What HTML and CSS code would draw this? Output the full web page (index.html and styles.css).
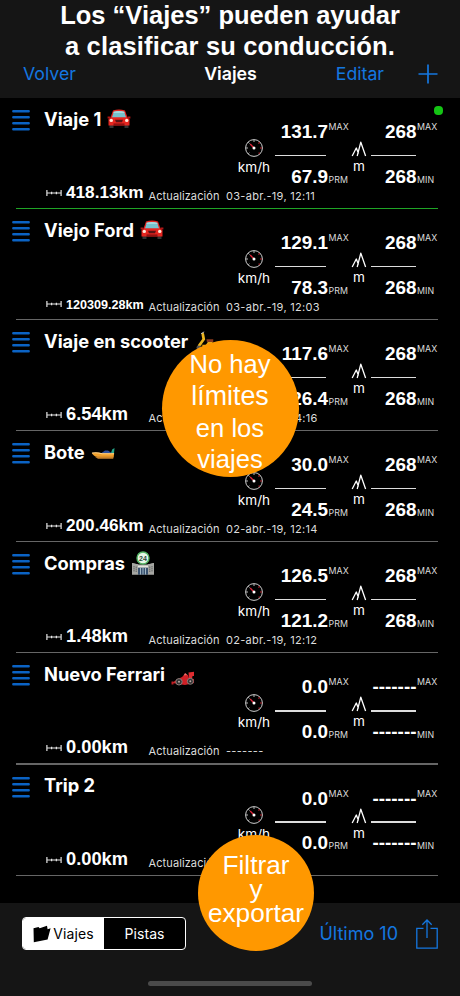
FILE: index.html
```
<!DOCTYPE html>
<html lang="es">
<head>
  <meta charset="utf-8">
  <meta name="viewport" content="width=device-width, initial-scale=1">
  <title>Viajes</title>
  <link rel="stylesheet" href="styles.css">
</head>
<body>

<div class="screen">

  <header class="header">
    <h1 class="headline">Los “Viajes” pueden ayudar<br><span class="second">a clasificar su conducción.</span></h1>
    <nav class="nav">
      <a class="back">Volver</a>
      <span class="nav-title">Viajes</span>
      <span class="nav-right">
        <a class="edit">Editar</a>
        <svg class="plus" viewBox="0 0 20 20"><path d="M10 .5v19M.5 10h19" stroke="#1477e0" stroke-width="1.700"/></svg>
      </span>
    </nav>
  </header>

  <main class="trips">

    <section class="trip active">
      <svg class="menu"><use href="#menu"/></svg>
      <h2 class="name">Viaje 1 <svg class="emoji"><use href="#car"/></svg></h2>
      <div class="unit speed"><svg><use href="#gauge"/></svg>km/h</div>
      <div class="stats"><b>131.7</b><i>MAX</i><hr><b>67.9</b><i class="low">PRM</i></div>
      <div class="unit alt"><svg><use href="#peaks"/></svg>m</div>
      <div class="stats"><b>268</b><i>MAX</i><hr><b>268</b><i class="low">MIN</i></div>
      <div class="foot"><svg class="ruler"><use href="#ruler"/></svg><span class="dist mid">418.13km</span><span class="upd">Actualización</span><span class="date">03-abr.-19, 12:11</span></div>
      <div class="divider"></div>
      <span class="dot"></span>
    </section>

    <section class="trip">
      <svg class="menu"><use href="#menu"/></svg>
      <h2 class="name">Viejo Ford <svg class="emoji"><use href="#car"/></svg></h2>
      <div class="unit speed"><svg><use href="#gauge"/></svg>km/h</div>
      <div class="stats"><b>129.1</b><i>MAX</i><hr><b>78.3</b><i class="low">PRM</i></div>
      <div class="unit alt"><svg><use href="#peaks"/></svg>m</div>
      <div class="stats"><b>268</b><i>MAX</i><hr><b>268</b><i class="low">MIN</i></div>
      <div class="foot"><svg class="ruler"><use href="#ruler"/></svg><span class="dist small">120309.28km</span><span class="upd">Actualización</span><span class="date">03-abr.-19, 12:03</span></div>
      <div class="divider"></div>
    </section>

    <section class="trip">
      <svg class="menu"><use href="#menu"/></svg>
      <h2 class="name">Viaje en scooter <svg class="emoji"><use href="#scooter"/></svg></h2>
      <div class="unit speed"><svg><use href="#gauge"/></svg>km/h</div>
      <div class="stats"><b>117.6</b><i>MAX</i><hr><b>26.4</b><i class="low">PRM</i></div>
      <div class="unit alt"><svg><use href="#peaks"/></svg>m</div>
      <div class="stats"><b>268</b><i>MAX</i><hr><b>268</b><i class="low">MIN</i></div>
      <div class="foot"><svg class="ruler"><use href="#ruler"/></svg><span class="dist">6.54km</span><span class="upd">Actualización</span><span class="date">02-abr.-19, 14:16</span></div>
      <div class="divider"></div>
    </section>

    <section class="trip">
      <svg class="menu"><use href="#menu"/></svg>
      <h2 class="name">Bote <svg class="emoji boat"><use href="#boat"/></svg></h2>
      <div class="unit speed"><svg><use href="#gauge"/></svg>km/h</div>
      <div class="stats"><b>30.0</b><i>MAX</i><hr><b>24.5</b><i class="low">PRM</i></div>
      <div class="unit alt"><svg><use href="#peaks"/></svg>m</div>
      <div class="stats"><b>268</b><i>MAX</i><hr><b>268</b><i class="low">MIN</i></div>
      <div class="foot"><svg class="ruler"><use href="#ruler"/></svg><span class="dist mid">200.46km</span><span class="upd">Actualización</span><span class="date">02-abr.-19, 12:14</span></div>
      <div class="divider"></div>
    </section>

    <section class="trip">
      <svg class="menu"><use href="#menu"/></svg>
      <h2 class="name">Compras <svg class="emoji tall"><use href="#store"/></svg></h2>
      <div class="unit speed"><svg><use href="#gauge"/></svg>km/h</div>
      <div class="stats"><b>126.5</b><i>MAX</i><hr><b>121.2</b><i class="low">PRM</i></div>
      <div class="unit alt"><svg><use href="#peaks"/></svg>m</div>
      <div class="stats"><b>268</b><i>MAX</i><hr><b>268</b><i class="low">MIN</i></div>
      <div class="foot"><svg class="ruler"><use href="#ruler"/></svg><span class="dist">1.48km</span><span class="upd">Actualización</span><span class="date">02-abr.-19, 12:12</span></div>
      <div class="divider"></div>
    </section>

    <section class="trip">
      <svg class="menu"><use href="#menu"/></svg>
      <h2 class="name">Nuevo Ferrari <svg class="emoji flat"><use href="#racer"/></svg></h2>
      <div class="unit speed"><svg><use href="#gauge"/></svg>km/h</div>
      <div class="stats"><b>0.0</b><i>MAX</i><hr><b>0.0</b><i class="low">PRM</i></div>
      <div class="unit alt"><svg><use href="#peaks"/></svg>m</div>
      <div class="stats"><b>-------</b><i>MAX</i><hr><b>-------</b><i class="low">MIN</i></div>
      <div class="foot"><svg class="ruler"><use href="#ruler"/></svg><span class="dist">0.00km</span><span class="upd">Actualización</span><span class="date">-------</span></div>
      <div class="divider"></div>
    </section>

    <section class="trip">
      <svg class="menu"><use href="#menu"/></svg>
      <h2 class="name">Trip 2</h2>
      <div class="unit speed"><svg><use href="#gauge"/></svg>km/h</div>
      <div class="stats"><b>0.0</b><i>MAX</i><hr><b>0.0</b><i class="low">PRM</i></div>
      <div class="unit alt"><svg><use href="#peaks"/></svg>m</div>
      <div class="stats"><b>-------</b><i>MAX</i><hr><b>-------</b><i class="low">MIN</i></div>
      <div class="foot"><svg class="ruler"><use href="#ruler"/></svg><span class="dist">0.00km</span><span class="upd">Actualización</span><span class="date">-------</span></div>
      <div class="divider"></div>
    </section>

  </main>

  <footer class="toolbar">
    <div class="tools">
      <div class="segmented">
        <span class="seg on"><svg class="folder" viewBox="0 0 18 18"><path d="M.5 3.200L5.500 2l1.200 1.300L14 .8l.6 3.400 3-.9-3 11.200L.8 17.300z" fill="#000"/></svg>Viajes</span>
        <span class="seg">Pistas</span>
      </div>
      <a class="filter">Último 10</a>
      <svg class="share" viewBox="0 0 22 30"><path d="M7.500 9.400H.8v19.800h20.400V9.400h-6.700M11 19V1.200M6.300 5.700L11 1l4.700 4.700" fill="none" stroke="#1477e0" stroke-width="1.300"/></svg>
    </div>
    <div class="home"></div>
  </footer>

  <div class="bubble limits"><span>No hay</span><span class="wide">límites</span><span>en los</span><span>viajes</span></div>
  <div class="bubble export"><span>Filtrar</span><span>y</span><span>exportar</span></div>

</div>

<!-- icons -->
<svg class="defs">
  <symbol id="menu" viewBox="0 0 18 22">
    <path d="M1.300 2.300h15.400M1.300 8.300h15.400M1.300 14.300h15.400M1.300 20.300h15.400" stroke="#0b63c4" stroke-width="2.400" stroke-linecap="round"/>
  </symbol>
  <symbol id="gauge" viewBox="0 0 20 20">
    <circle cx="10" cy="10" r="8.400" fill="none" stroke="#ccc" stroke-width="1"/>
    <path d="M10 2v2M4.300 4.300l1.200 1.200M2 10h2M4.300 15.700l1-1" stroke="#ccc" stroke-width=".9"/>
    <path d="M15.700 4.300l-1.200 1.200M18 10h-2M15.700 15.700l-1-1" stroke="#c22a35" stroke-width="1.100"/>
    <path d="M10 10L6.200 6" stroke="#e0283c" stroke-width="1.300"/>
    <circle cx="10" cy="10" r="1.500" fill="#fff"/>
  </symbol>
  <symbol id="peaks" viewBox="0 0 16 16">
    <path d="M1.200 15L5.300 7L7.500 12.500M6.200 15L9.800 1.200L14.600 15" fill="none" stroke="#fff" stroke-width="1.300" stroke-linejoin="round"/>
  </symbol>
  <symbol id="ruler" viewBox="0 0 16 8">
    <path d="M.9 1v6M15.100 1v6M.9 4h14.200M5.600 2.700v2.600M10.400 2.700v2.600" fill="none" stroke="#e4e4e4" stroke-width="1.200"/>
  </symbol>
  <symbol id="car" viewBox="0 0 24 20">
    <path d="M2.500 14h4v5h-4zM17.500 14h4v5h-4z" fill="#333"/>
    <path d="M6 1.500Q12-.3 18 1.500L20.500 8.500L22.500 10V16.500H1.500V10L3.500 8.500z" fill="#e5251f"/>
    <path d="M6.800 2.700Q12 1.200 17.200 2.700L19 8.200H5z" fill="#76c3cd"/>
    <path d="M6.800 2.700Q12 1.200 17.200 2.700L17.600 4H6.400z" fill="#a6dadd"/>
    <path d="M.6 7.500h2.800v2H.6zM20.600 7.500h2.800v2h-2.800z" fill="#b01515"/>
    <path d="M8 10.800h8l-1 2.400H9z" fill="#571214"/>
    <path d="M6.500 14.400h11v2h-11z" fill="#8e1212"/>
    <circle cx="4.300" cy="11.400" r="1.700" fill="#ffe9da"/>
    <circle cx="19.700" cy="11.400" r="1.700" fill="#ffe9da"/>
  </symbol>
  <symbol id="scooter" viewBox="0 0 24 22">
    <path d="M8.500 3.500L9.500 9 4.500 16" fill="none" stroke="#edb51f" stroke-width="3" stroke-linecap="round"/>
    <path d="M6 15l6 3h8l-1-6h-5l-2 3z" fill="#e5a91a"/>
    <path d="M12.500 9h7.500v3h-7z" fill="#8b3a1d"/>
    <circle cx="4" cy="18.500" r="2.500" fill="#555"/>
    <circle cx="19" cy="18.500" r="2.500" fill="#555"/>
    <path d="M6.500 3l3.500-2" stroke="#ccc" stroke-width="1"/>
  </symbol>
  <symbol id="boat" viewBox="0 0 24 20">
    <path d="M10.500 10L14 7.500h3l3.500 2.500z" fill="#2d4f9a"/>
    <path d="M20 10l1.200-3.500L23.500 5l-.6 6z" fill="#26a88c"/>
    <path d="M.8 10q5-1 10 .2h12.400l-.6 4H7Q2.500 13.200.8 10z" fill="#f0a02c"/>
    <path d="M1 10q5-.8 10 .7h12" fill="none" stroke="#ffd28a" stroke-width="1.100"/>
    <path d="M3.500 13.500h19.200l-.5 2.300H7z" fill="#c8822a"/>
  </symbol>
  <symbol id="store" viewBox="0 0 24 24">
    <path d="M1 12l7 1.600h8L23 12v11.500H1z" fill="#aeb2ae"/>
    <path d="M1 12l6 1.500v10H1z" fill="#a5a6a2"/>
    <path d="M23 12l-6 1.500v10h6z" fill="#a5a6a2"/>
    <path d="M3 15.200v6M5.200 15.600v5.600M21 15.200v6M18.800 15.600v5.600" stroke="#4e504f" stroke-width="1" stroke-dasharray="1.200 .8"/>
    <path d="M7 14.700h10v2H7z" fill="#e6e6df"/>
    <path d="M7 16.700h10v6.800H7z" fill="#38516f"/>
    <path d="M9.500 17v6.500M12 17v6.500M14.500 17v6.500" stroke="#bdd2dc" stroke-width=".8"/>
    <circle cx="12" cy="7" r="6" fill="#e6f6e7" stroke="#54b465" stroke-width="1.400"/>
    <text x="12" y="9.600" class="store-sign">24</text>
  </symbol>
  <symbol id="racer" viewBox="0 0 24 16">
    <path d="M1 13l5-3.500 5-2.500 2-2h4l1 3 5 1v4l-9 2z" fill="#cf2026"/>
    <path d="M17.500 2.500l5.500-.8V6h-1.500l-.5 3-3-1z" fill="#e02c30"/>
    <path d="M.5 11.500h2v3h-2z" fill="#bf1c22"/>
    <path d="M12.500 5.500l1.600-2.400 2.400 1.900z" fill="#f16a66"/>
    <circle cx="8" cy="11.800" r="3.200" fill="#333" stroke="#8a7b79" stroke-width="1"/>
    <circle cx="19.300" cy="11.300" r="3" fill="#333" stroke="#8a7b79" stroke-width="1"/>
    <circle cx="8" cy="11.800" r="1" fill="#b5a5a2"/>
    <circle cx="19.300" cy="11.300" r="1" fill="#b5a5a2"/>
  </symbol>
</svg>

</body>
</html>
```
FILE: styles.css
```
* { box-sizing: border-box; }
body { margin: 0; background: #000; color: #fff; font-family: Inter, "Liberation Sans", sans-serif; }
.defs { display: none; }
.screen { position: relative; width: 460px; height: 996px; overflow: hidden; display: flex; flex-direction: column; }

/* header */
.header { height: 98px; flex: none; background: #151515; }
.headline { margin: 0; font: bold 25.5px/31px "Liberation Sans", Arial, sans-serif; text-align: center; white-space: nowrap; }
.second { letter-spacing: .15px; }
.nav { display: grid; grid-template-columns: 1fr auto 1fr; align-items: center; height: 24px; padding: 0 22px 0 23px; font-size: 17.7px; line-height: 24px; }
.nav-title { font-weight: 600; font-size: 17.8px; }
.nav-right { display: flex; justify-content: flex-end; align-items: center; gap: 34px; }
.back, .edit, .filter { color: #1477e0; }
.plus { width: 20px; height: 20px; }

/* trip list */
.trips { height: 805px; flex: none; }
.trip { position: relative; display: grid; height: 111.1px; grid-template-columns: 44px 193px 35px 78px 18px 70px 2px; grid-template-rows: 87px 23px 1.1px; }
.menu { width: 18px; height: 22px; margin: 11px 0 0 12.4px; }
.name { margin: 8.6px 0 0; display: flex; height: 24px; align-items: center; gap: 6px; font-size: 18.3px; font-weight: 650; line-height: 24px; white-space: nowrap; }
.emoji { width: 24px; height: 20px; flex: none; margin-top: 1px; }
.emoji.boat { margin-top: 3px; }
.emoji.tall { height: 24px; margin-top: 0; }
.emoji.flat { height: 16px; margin-top: 7px; }
.store-sign { font: bold 7px "Liberation Sans", sans-serif; text-anchor: middle; fill: #2c4a37; }

.unit { display: flex; flex-direction: column; align-items: center; font-size: 13.6px; line-height: 18px; }
.speed { padding: 40px 1px 0 0; }
.speed svg { width: 20px; height: 20px; flex: none; }
.alt { padding-top: 43px; }
.alt svg { width: 16px; height: 16px; flex: none; }

.stats { display: grid; grid-template-columns: 1fr 22px; grid-template-rows: 16px 28.7px 16px; padding-top: 26px; height: 87px; }
.stats b { font: bold 18.9px/16px "Liberation Sans", Arial, sans-serif; text-align: right; }
.stats i { font-style: normal; font-size: 8.8px; line-height: 5px; letter-spacing: .1px; padding-left: .5px; color: #ddd; }
.stats .low { align-self: end; line-height: 10px; }
.stats hr { grid-column: 1 / 3; align-self: center; width: auto; height: 1.4px; margin: 2px 24px 0 2.5px; border: 0; background: #ddd; }
.alt + .stats b, .alt + .stats hr { margin-right: -.5px; }
.alt + .stats i { padding-left: 1px; }
.alt + .stats hr { margin-right: 22px; }

.foot { grid-column: 1 / 8; display: flex; align-items: flex-start; padding-left: 46px; font-size: 11px; line-height: 23.4px; color: #ddd; white-space: nowrap; }
.ruler { width: 16px; height: 8px; margin: 4px 4px 0 0; flex: none; }
.dist { width: 82.5px; font: bold 18.3px/14px "Liberation Sans", Arial, sans-serif; color: #fff; }
.dist.mid { font-size: 17.2px; line-height: 15px; }
.dist.small { font-size: 12.6px; line-height: 18px; }
.upd { width: 77.5px; letter-spacing: .1px; }
.date { letter-spacing: .3px; }
.divider { grid-column: 1 / 8; margin: 0 2px 0 16px; background: #666; }
.active .divider { background: #1fa526; }
.dot { position: absolute; left: 434px; top: 8px; width: 9px; height: 9px; border-radius: 4px; background: #14c414; }

/* bottom bar */
.toolbar { flex: 1; background: #151515; padding: 14px 22px 0; }
.tools { display: flex; align-items: center; height: 33px; }
.segmented { display: flex; width: 164px; height: 33px; border: 1px solid #fff; border-radius: 4px; background: #000; overflow: hidden; font-size: 14px; }
.seg { flex: 1; display: flex; align-items: center; justify-content: center; gap: 2px; letter-spacing: .1px; }
.seg.on { background: #fff; color: #000; }
.folder { width: 18px; height: 18px; }
.filter { margin-left: auto; font-size: 18px; }
.share { width: 22px; height: 30px; margin-left: 18px; }
.home { width: 164px; height: 5px; margin: 31px auto 0; border-radius: 3px; background: #4a4a4a; }

/* callouts */
.bubble { position: absolute; display: flex; flex-direction: column; align-items: center; border-radius: 50%; background: #ff9800; font-family: "Liberation Sans", Arial, sans-serif; color: #fff; }
.limits { left: 161.5px; top: 340px; width: 137px; height: 137px; padding-top: 9px; font-size: 25.6px; line-height: 31.8px; }
.limits .wide { font-size: 26.8px; }
.export { left: 198px; top: 835px; width: 116px; height: 116px; padding-top: 18px; font-size: 26.2px; line-height: 24px; }
```
